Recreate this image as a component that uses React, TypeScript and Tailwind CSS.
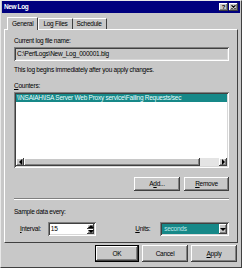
import React from "react";

const raised =
  "bg-[#c8c8c8] shadow-[inset_-1px_-1px_0_#404040,inset_1px_1px_0_#ffffff,inset_-2px_-2px_0_#808080]";
const sunken =
  "shadow-[inset_1px_1px_0_#808080,inset_-1px_-1px_0_#ffffff,inset_2px_2px_0_#404040,inset_-2px_-2px_0_#d8d8d8]";

function Tri({ dir }: { dir: "left" | "right" | "up" | "down" }) {
  const pts = {
    left: "3,0 3,6 0,3",
    right: "0,0 0,6 3,3",
    up: "0,3 6,3 3,0",
    down: "0,0 6,0 3,3",
  }[dir];
  const w = dir === "left" || dir === "right" ? 3 : 6;
  const h = dir === "left" || dir === "right" ? 6 : 3;
  return (
    <svg width={w} height={h} viewBox={`0 0 ${w} ${h}`}>
      <polygon points={pts} fill="#000" />
    </svg>
  );
}

function Btn({ children, w }: { children: React.ReactNode; w: string }) {
  return (
    <div className={`${raised} ${w} flex items-center justify-center text-black`}>{children}</div>
  );
}

export default function App() {
  return (
    <div
      className="w-[242px] h-[268px] bg-[#c8c8c8] border-t border-l border-[#e8e8e8] border-r-[#404040] border-b-[#404040] border-r border-b flex flex-col overflow-hidden text-[6.5px] leading-[8px] tracking-[-0.25px] text-black"
      style={{ fontFamily: '"Liberation Sans", Arial, sans-serif' }}
    >
      {/* title bar */}
      <div className="mx-[1px] h-[12px] bg-[#00007e] flex items-center justify-between pl-[2px] pr-[2px]">
        <span className="text-white font-bold text-[6.5px] tracking-[-0.4px]">New Log</span>
        <div className="flex gap-[1px]">
          <div className={`${raised} w-[9px] h-[8px] flex items-center justify-center font-bold text-[6px] leading-[6px] tracking-normal`}>?</div>
          <div className={`${raised} w-[9px] h-[8px] flex items-center justify-center`}>
            <svg width="5" height="4" viewBox="0 0 5 4">
              <path d="M0.5 0.3 L4.5 3.7 M4.5 0.3 L0.5 3.7" stroke="#000" strokeWidth="1.1" />
            </svg>
          </div>
        </div>
      </div>

      <div className="px-[3px] pt-[3px] flex flex-col">
        {/* tabs */}
        <div className="flex items-end h-[13px] pl-[3px]">
          <div className="h-[13px] px-[4px] border-t border-l border-[#ffffff] border-r border-r-[#404040] rounded-t-[1px] flex items-center -mb-[1px] bg-[#c8c8c8] relative z-10">
            General
          </div>
          <div className="h-[11px] px-[4px] border-t border-l border-[#ffffff] border-r border-r-[#404040] rounded-t-[1px] flex items-center">
            Log Files
          </div>
          <div className="h-[11px] px-[4px] border-t border-[#ffffff] border-r border-r-[#404040] rounded-t-[1px] flex items-center">
            Schedule
          </div>
        </div>

        {/* panel */}
        <div className="h-[214px] border-t border-l border-[#ffffff] border-r border-b border-r-[#404040] border-b-[#404040] pl-[9px] pr-[8px] flex flex-col">
          <div className="mt-[7px]">Current log file name:</div>
          <div className={`mt-[2px] h-[14px] bg-[#c8c8c8] ${sunken} flex items-center pl-[3px]`}>
            C:\PerfLogs\New_Log_000001.blg
          </div>
          <div className="mt-[5px]">This log begins immediately after you apply changes.</div>
          <div className="mt-[8px]">
            <u>C</u>ounters:
          </div>
          <div className={`mt-[2px] h-[76px] bg-white ${sunken} p-[2px] flex flex-col`}>
            <div className="h-[8px] bg-[#168888] text-[#e8ffff] pl-[1px] whitespace-nowrap overflow-hidden">
              \\NSAIAH\ISA Server Web Proxy service\Failing Requests/sec
            </div>
            <div className="flex-1" />
            <div className="h-[8px] flex">
              <div className={`${raised} w-[8px] flex items-center justify-center`}>
                <Tri dir="left" />
              </div>
              <div className={`${raised} flex-1`} />
              <div className="w-[19px] bg-[#e4e4e4]" />
              <div className={`${raised} w-[8px] flex items-center justify-center`}>
                <Tri dir="right" />
              </div>
            </div>
          </div>
          <div className="mt-[9px] flex justify-end gap-[4px]">
            <Btn w="w-[46px] h-[14px]">
              A<u>d</u>d...
            </Btn>
            <Btn w="w-[45px] h-[14px]">
              <u>R</u>emove
            </Btn>
          </div>
          <div className="mt-[7px] border-t border-[#808080] border-b border-b-white" />
          <div className="mt-[8px]">Sample data every:</div>
          <div className="mt-[6px] flex items-center">
            <div className="w-[36px] pl-[6px]">
              <u>I</u>nterval:
            </div>
            <div className={`w-[52px] h-[14px] bg-white ${sunken} flex items-center pl-[3px] pr-[2px]`}>
              <span className="flex-1">15</span>
              <div className="flex flex-col h-[10px] w-[7px]">
                <div className={`${raised} flex-1 flex items-center justify-center`}>
                  <Tri dir="up" />
                </div>
                <div className={`${raised} flex-1 flex items-center justify-center`}>
                  <Tri dir="down" />
                </div>
              </div>
            </div>
            <div className="ml-[39px] w-[27px]">
              <u>U</u>nits:
            </div>
            <div className={`w-[74px] h-[14px] bg-white ${sunken} flex items-center p-[2px]`}>
              <div className="flex-1 h-full bg-[#168888] text-[#bfe8e8] flex items-center pl-[2px]">seconds</div>
              <div className={`${raised} w-[8px] h-full flex items-center justify-center`}>
                <Tri dir="down" />
              </div>
            </div>
          </div>
        </div>

        {/* bottom buttons */}
        <div className="mt-[2px] flex justify-end gap-[3px] pr-[1px]">
          <div className="border border-black">
            <Btn w="w-[42px] h-[15px]">OK</Btn>
          </div>
          <Btn w="w-[46px] h-[17px]">Cancel</Btn>
          <Btn w="w-[46px] h-[17px]">
            <u>A</u>pply
          </Btn>
        </div>
      </div>
    </div>
  );
}
